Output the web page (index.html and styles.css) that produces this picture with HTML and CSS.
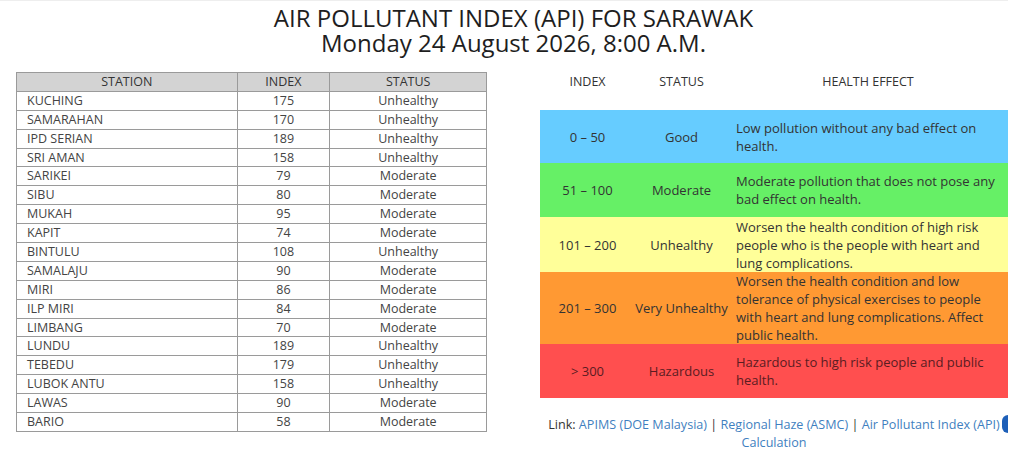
FILE: index.html
```html
<!DOCTYPE html>
<html lang="en">
<head>
<meta charset="utf-8">
<title>Air Pollutant Index (API) for Sarawak</title>
<link rel="stylesheet" href="styles.css">
</head>
<body>
<div class="page">
  <h1 class="title">AIR POLLUTANT INDEX (API) FOR SARAWAK<br>Monday 24 August 2026, 8:00 A.M.</h1>
  <div class="content">
    <table class="stations">
      <thead>
        <tr><th class="c-station">STATION</th><th class="c-index">INDEX</th><th class="c-status">STATUS</th></tr>
      </thead>
      <tbody>
        <tr><td class="name">KUCHING</td><td>175</td><td>Unhealthy</td></tr>
        <tr><td class="name">SAMARAHAN</td><td>170</td><td>Unhealthy</td></tr>
        <tr><td class="name">IPD SERIAN</td><td>189</td><td>Unhealthy</td></tr>
        <tr><td class="name">SRI AMAN</td><td>158</td><td>Unhealthy</td></tr>
        <tr><td class="name">SARIKEI</td><td>79</td><td>Moderate</td></tr>
        <tr><td class="name">SIBU</td><td>80</td><td>Moderate</td></tr>
        <tr><td class="name">MUKAH</td><td>95</td><td>Moderate</td></tr>
        <tr><td class="name">KAPIT</td><td>74</td><td>Moderate</td></tr>
        <tr><td class="name">BINTULU</td><td>108</td><td>Unhealthy</td></tr>
        <tr><td class="name">SAMALAJU</td><td>90</td><td>Moderate</td></tr>
        <tr><td class="name">MIRI</td><td>86</td><td>Moderate</td></tr>
        <tr><td class="name">ILP MIRI</td><td>84</td><td>Moderate</td></tr>
        <tr><td class="name">LIMBANG</td><td>70</td><td>Moderate</td></tr>
        <tr><td class="name">LUNDU</td><td>189</td><td>Unhealthy</td></tr>
        <tr><td class="name">TEBEDU</td><td>179</td><td>Unhealthy</td></tr>
        <tr><td class="name">LUBOK ANTU</td><td>158</td><td>Unhealthy</td></tr>
        <tr><td class="name">LAWAS</td><td>90</td><td>Moderate</td></tr>
        <tr><td class="name">BARIO</td><td>58</td><td>Moderate</td></tr>
      </tbody>
    </table>

    <div class="legend">
      <div class="legend-head">
        <div>INDEX</div><div>STATUS</div><div>HEALTH EFFECT</div>
      </div>
      <div class="band good">
        <div class="range">0 – 50</div><div class="state">Good</div>
        <div class="effect">Low pollution without any bad effect on health.</div>
      </div>
      <div class="band moderate">
        <div class="range">51 – 100</div><div class="state">Moderate</div>
        <div class="effect">Moderate pollution that does not pose any bad effect on health.</div>
      </div>
      <div class="band unhealthy">
        <div class="range">101 – 200</div><div class="state">Unhealthy</div>
        <div class="effect">Worsen the health condition of high risk people who is the people with heart and lung complications.</div>
      </div>
      <div class="band very">
        <div class="range">201 – 300</div><div class="state">Very Unhealthy</div>
        <div class="effect">Worsen the health condition and low tolerance of physical exercises to people with heart and lung complications. Affect public health.</div>
      </div>
      <div class="band hazard">
        <div class="range">&gt; 300</div><div class="state">Hazardous</div>
        <div class="effect">Hazardous to high risk people and public health.</div>
      </div>
      <p class="links">Link: <a href="#">APIMS (DOE Malaysia)</a> | <a href="#">Regional Haze (ASMC)</a> | <a href="#">Air Pollutant Index (API) Calculation</a></p>
      <span class="float-tab"></span>
    </div>
  </div>
</div>
</body>
</html>
```

FILE: styles.css
```css
* { box-sizing: border-box; }
html, body { margin: 0; padding: 0; background: #fff; }
body {
  font-family: "Open Sans", "Noto Sans", sans-serif;
  color: #333;
}
.page {
  width: 1008px;
  height: 454px;
  border-top: 1px solid #eeeeee;
  position: relative;
  overflow: hidden;
}
.title {
  margin: 0;
  padding-top: 4px;
  padding-left: 19px;
  font-size: 24px;
  line-height: 25px;
  font-weight: 500;
  text-align: center;
  color: #1e1e1e;
}
.content {
  display: flex;
  align-items: flex-start;
  margin-top: 17px;
  padding-left: 16px;
}
.stations {
  width: 471px;
  border-collapse: collapse;
  font-size: 12.5px;
  color: #444;
  border: 1px solid #8c8c8c;
}
.stations th, .stations td {
  border: 1px solid #9a9a9a;
  height: 18.9px;
  padding: 0;
  line-height: 16px;
  text-align: center;
  font-weight: 400;
}
.stations th {
  background: #d3d3d3;
  color: #333;
}
.stations .c-station { width: 221px; }
.stations .c-index { width: 93px; }
.stations .c-status { width: 157px; }
.stations td.name { text-align: left; padding-left: 10px; }

.legend {
  margin-left: 53px;
  width: 468px;
  position: relative;
}
.legend-head, .band {
  display: grid;
  grid-template-columns: 95px 93px 280px;
}
.legend-head {
  height: 18px;
  line-height: 18px;
  font-size: 12.5px;
  text-align: center;
  color: #333;
  margin-top: 1px;
  margin-bottom: 19px;
}
.band {
  font-size: 13px;
  line-height: 18px;
  font-weight: 500;
  color: #333;
}
.band > div {
  display: flex;
  align-items: center;
}
.band .range, .band .state { justify-content: center; text-align: center; }
.band .effect { padding-left: 8px; padding-right: 10px; }
.good { background: #66ccff; min-height: 53px; }
.moderate { background: #66f066; min-height: 54px; }
.unhealthy { background: #ffff99; min-height: 55px; }
.very { background: #ff9933; min-height: 72px; }
.hazard { background: #ff4f4f; color: #5a1c22; min-height: 54px; }
.links {
  margin: 18px 0 0 0;
  font-size: 12.6px;
  line-height: 18px;
  text-align: center;
  color: #333;
  padding: 0;
}
.links a { color: #3f7fc0; text-decoration: none; }
.float-tab {
  position: absolute;
  right: 0;
  top: 343px;
  width: 6px;
  height: 18px;
  background: #1d5fb8;
  border-radius: 6px 0 0 6px;
}
```
